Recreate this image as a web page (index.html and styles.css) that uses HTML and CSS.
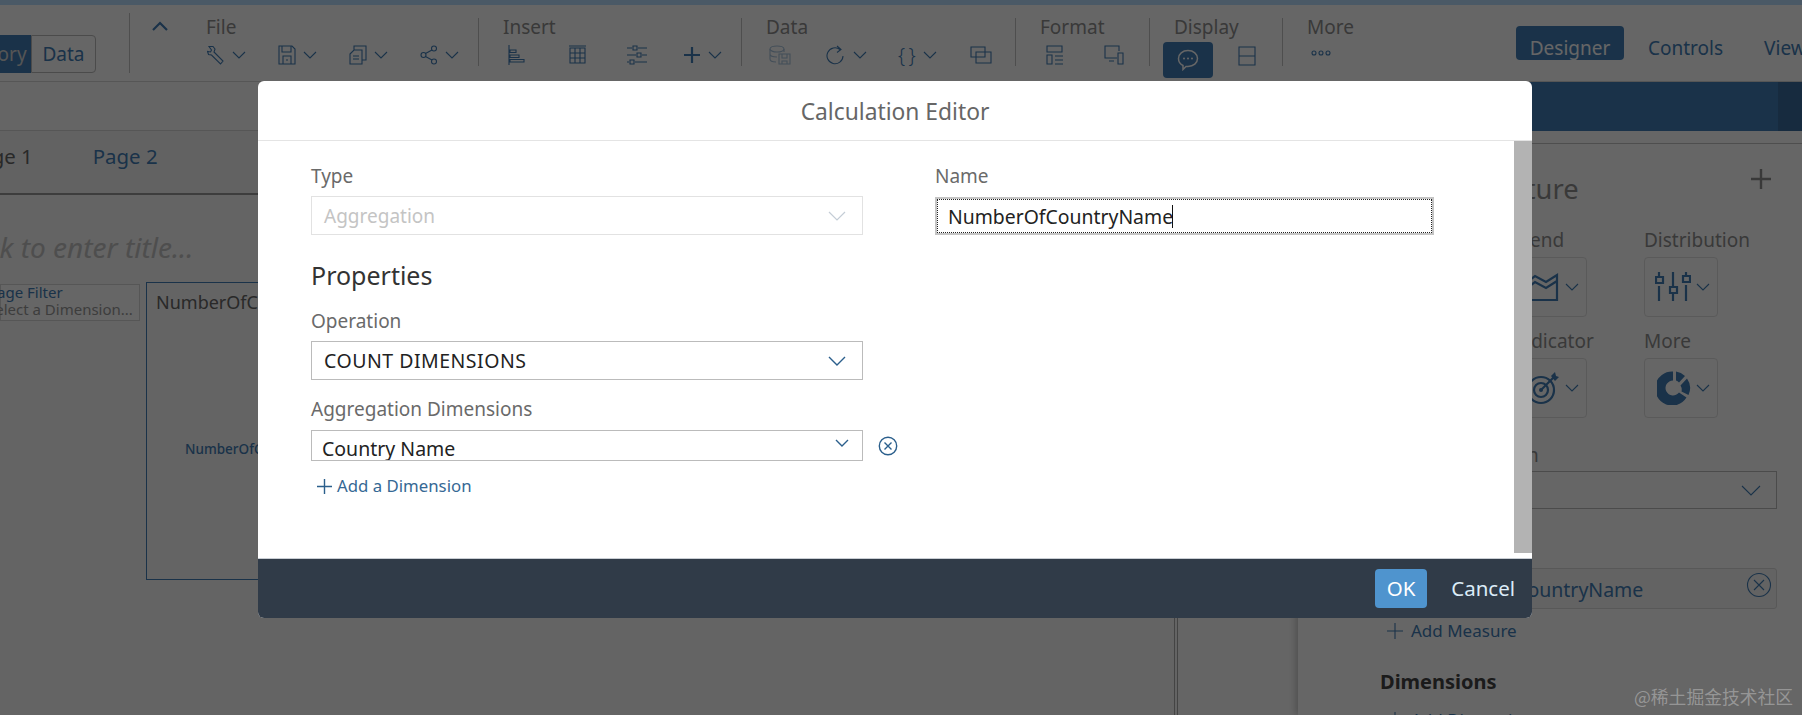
FILE: index.html
```html
<!DOCTYPE html>
<html lang="en">
<head>
<meta charset="utf-8">
<title>Calculation Editor</title>
<link rel="stylesheet" href="styles.css">
</head>
<body>
<div class="page">
  <div class="strip"></div>
  <header class="toolbar">
    <div class="mode-switch"><span class="mode on">Story</span><span class="mode">Data</span></div>
    <div class="collapse">
      <svg class="ic" width="18" height="12" viewBox="0 0 18 12"><path d="M2 10 9 3l7 7" class="s2"/></svg>
    </div>
    <div class="group g-file">
      <div class="g-label">File</div>
      <div class="g-icons">
        <span class="tool"><svg class="ic" width="18" height="20" viewBox="0 0 18 20"><path d="M2 1.500h4l2 2.500-1 3 9 9-2.500 3-9-9-3-.5-1-3 3 .5 1-2z" class="s"/></svg><svg class="chev" width="14" height="8" viewBox="0 0 14 8"><path d="m1 1 6 6 6-6" class="s"/></svg></span>
        <span class="tool"><svg class="ic" width="18" height="20" viewBox="0 0 18 20"><path d="M1 1h13l3 3v15H1zM4 1v6h9V1M5 19v-8h8v8M8 15h2" class="s"/></svg><svg class="chev" width="14" height="8" viewBox="0 0 14 8"><path d="m1 1 6 6 6-6" class="s"/></svg></span>
        <span class="tool"><svg class="ic" width="18" height="20" viewBox="0 0 18 20"><path d="M5 5V1h12v14h-4M1 9l4-4h8v14H1zM4 11h6M4 14h6" class="s"/></svg><svg class="chev" width="14" height="8" viewBox="0 0 14 8"><path d="m1 1 6 6 6-6" class="s"/></svg></span>
        <span class="tool"><svg class="ic" width="18" height="20" viewBox="0 0 18 20"><circle cx="3.500" cy="10" r="2.500" class="s"/><circle cx="14" cy="3.500" r="2.500" class="s"/><circle cx="14" cy="16.500" r="2.500" class="s"/><path d="m5.500 8.500 6.500-3.500M5.500 11.500l6.500 3.500" class="s"/></svg><svg class="chev" width="14" height="8" viewBox="0 0 14 8"><path d="m1 1 6 6 6-6" class="s"/></svg></span>
      </div>
    </div>
    <div class="group g-insert">
      <div class="g-label">Insert</div>
      <div class="g-icons">
        <span class="tool"><svg class="ic" width="18" height="20" viewBox="0 0 18 20"><path d="M1 0v20M2 5h6v2.500H2zM2 10h9v2.500H2zM2 14.500h14V17H2z" class="s"/></svg></span>
        <span class="tool"><svg class="ic" width="18" height="20" viewBox="0 0 18 20"><path d="M2 3h15v15H2zM2 8h15M2 13h15M7 3v15M12 3v15M1 1h17" class="s"/></svg></span>
        <span class="tool"><svg class="ic" width="20" height="20" viewBox="0 0 20 20"><path d="M0 3h5M11 3h9M6 1h4v4H6zM0 10h9M15 10h5M10 8h4v4h-4zM0 17h2M8 17h12M3 15h4v4H3z" class="s"/></svg></span>
        <span class="tool tool-plus"><svg class="ic" width="18" height="18" viewBox="0 0 18 18"><path d="M9 1v16M1 9h16" class="s2"/></svg><svg class="chev" width="14" height="8" viewBox="0 0 14 8"><path d="m1 1 6 6 6-6" class="s"/></svg></span>
      </div>
    </div>
    <div class="group g-data">
      <div class="g-label">Data</div>
      <div class="g-icons">
        <span class="tool"><svg class="ic faint" width="22" height="20" viewBox="0 0 22 20"><ellipse cx="8" cy="4" rx="7" ry="3" class="s"/><path d="M1 4v10c0 2 3 3 6 3M15 4v3M1 9c0 2 3 3 7 3M10 9h11v10H10zM13 9v4h5V9M13 19v-3h5v3" class="s"/></svg></span>
        <span class="tool"><svg class="ic" width="20" height="20" viewBox="0 0 20 20"><path d="M14 4.500a8 8 0 1 0 3 6.500M11 1l4 3.500-4 3" class="s"/></svg><svg class="chev" width="14" height="8" viewBox="0 0 14 8"><path d="m1 1 6 6 6-6" class="s"/></svg></span>
        <span class="tool"><span class="braces">{ }</span><svg class="chev" width="14" height="8" viewBox="0 0 14 8"><path d="m1 1 6 6 6-6" class="s"/></svg></span>
        <span class="tool"><svg class="ic" width="22" height="18" viewBox="0 0 22 18"><path d="M1 1h14v10H1zM6 6h15v11H6z" class="s"/></svg></span>
      </div>
    </div>
    <div class="group g-format">
      <div class="g-label">Format</div>
      <div class="g-icons">
        <span class="tool"><svg class="ic" width="18" height="20" viewBox="0 0 18 20"><path d="M1 1h15v6H1zM1 10h5v9H1zM9 11h8M9 15h8M9 19h8" class="s"/></svg></span>
        <span class="tool"><svg class="ic" width="20" height="20" viewBox="0 0 20 20"><path d="M13 13H1V1h14v5M5 16h5M14 8h5v11h-5z" class="s"/></svg></span>
      </div>
    </div>
    <div class="group g-display">
      <div class="g-label">Display</div>
      <div class="g-icons">
        <span class="tool tool-on"><svg width="22" height="22" viewBox="0 0 22 22"><path d="M11 1.500c5.500 0 9.500 3.500 9.500 8s-4 8-9.500 8H9l-3 3v-4C3 15 1.500 12.500 1.500 9.500c0-4.500 4-8 9.500-8z" class="sw"/><circle cx="7" cy="9.500" r="1" class="fw"/><circle cx="11" cy="9.500" r="1" class="fw"/><circle cx="15" cy="9.500" r="1" class="fw"/></svg></span>
        <span class="tool"><svg class="ic" width="18" height="20" viewBox="0 0 18 20"><path d="M1 1h16v18H1zM1 10h16" class="s"/></svg></span>
      </div>
    </div>
    <div class="group g-more">
      <div class="g-label">More</div>
      <div class="g-icons">
        <span class="tool"><svg class="ic" width="20" height="6" viewBox="0 0 20 6"><circle cx="3" cy="3" r="2" class="s"/><circle cx="10" cy="3" r="2" class="s"/><circle cx="17" cy="3" r="2" class="s"/></svg></span>
      </div>
    </div>
    <nav class="views">
      <span class="view on">Designer</span>
      <span class="view">Controls</span>
      <span class="view">View</span>
    </nav>
  </header>

  <div class="workspace">
    <main class="story">
      <div class="story-top"></div>
      <div class="tabs"><span class="tab cur">Page 1</span><span class="tab">Page 2</span></div>
      <div class="canvas">
        <div class="title-hint">Click to enter title...</div>
        <div class="canvas-row">
          <div class="page-filter"><div class="pf-name">Page Filter</div><div class="pf-hint">Select a Dimension...</div></div>
          <div class="chart-box">
            <div class="chart-title">NumberOfCountryName</div>
            <div class="chart-value">NumberOfCountryName</div>
          </div>
        </div>
      </div>
    </main>
    <aside class="builder">
      <div class="builder-head"><div class="builder-end"></div></div>
      <div class="builder-body">
        <div class="section-head"><h2 class="builder-title">Chart Structure</h2><svg class="add-big" width="22" height="22" viewBox="0 0 22 22"><path d="M11 1v20M1 11h20" class="sg"/></svg></div>
        <div class="tiles">
          <div class="tile-cell"><div class="tile-label">Comparison</div><div class="tile"></div></div>
          <div class="tile-cell"><div class="tile-label">Trend</div><div class="tile"><svg width="34" height="30" viewBox="0 0 34 30"><path d="M1 28h30V3L20 10 9 4 1 10zM1 16l8-6 11 6 11-7" class="s2"/></svg><svg class="chev" width="14" height="8" viewBox="0 0 14 8"><path d="m1 1 6 6 6-6" class="s"/></svg></div></div>
          <div class="tile-cell"><div class="tile-label">Distribution</div><div class="tile"><svg width="36" height="30" viewBox="0 0 36 30"><path d="M4 0v5M4 14v15M18 0v14M18 22v7M31 0v5M31 13v16M1 5h7v6H1zM15 15h7v6h-7zM28 4h7v6h-7z" class="s2"/></svg><svg class="chev" width="14" height="8" viewBox="0 0 14 8"><path d="m1 1 6 6 6-6" class="s"/></svg></div></div>
          <div class="tile-cell"></div>
          <div class="tile-cell"><div class="tile-label">Indicator</div><div class="tile"><svg width="34" height="34" viewBox="0 0 34 34"><circle cx="15" cy="19" r="13" class="s2"/><circle cx="15" cy="19" r="7" class="s2"/><circle cx="15" cy="19" r="2" class="fb"/><path d="m15 19 13-13" class="s2"/><path d="m25 5 4-4 1 4 3 1-4 4z" class="fb"/></svg><svg class="chev" width="14" height="8" viewBox="0 0 14 8"><path d="m1 1 6 6 6-6" class="s"/></svg></div></div>
          <div class="tile-cell"><div class="tile-label">More</div><div class="tile"><svg width="34" height="34" viewBox="0 0 34 34"><path d="M16 .5v9a7.500 7.500 0 1 0 6 12l7.500 5A17 17 0 1 1 16 .5z" class="fb"/><path d="M19 .5a16.500 16.500 0 0 1 9 4.500l-6 6.500a8 8 0 0 0-3-2z" class="fb"/><path d="m30 7.500a16.500 16.500 0 0 1 1.500 16.500l-7-3.500a8 8 0 0 0-1-6z" class="fb"/></svg><svg class="chev" width="14" height="8" viewBox="0 0 14 8"><path d="m1 1 6 6 6-6" class="s"/></svg></div></div>
        </div>
        <div class="field-label">Chart Orientation</div>
        <div class="orient"><svg width="20" height="11" viewBox="0 0 20 11"><path d="m1 1 9 9 9-9" class="s"/></svg></div>
        <div class="measure">NumberOfCountryName<svg class="measure-x" width="26" height="26" viewBox="0 0 26 26"><circle cx="13" cy="13" r="11.500" class="s"/><path d="m8 8 10 10M18 8 8 18" class="s"/></svg></div>
        <div class="add-link"><svg width="16" height="16" viewBox="0 0 16 16"><path d="M8 0v16M0 8h16" class="s"/></svg>Add Measure</div>
        <h3 class="sub-title">Dimensions</h3>
        <div class="add-link add-dim"><svg width="16" height="16" viewBox="0 0 16 16"><path d="M8 0v16M0 8h16" class="s"/></svg>Add Dimension</div>
      </div>
    </aside>
  </div>

  <div class="dim"></div>

  <section class="modal">
    <h1 class="modal-title">Calculation Editor</h1>
    <div class="modal-body">
      <div class="modal-scroll">
        <div class="form-row">
          <div class="col">
            <div class="lbl">Type</div>
            <div class="select disabled"><span>Aggregation</span><svg width="18" height="10" viewBox="0 0 18 10"><path d="m1 1 8 8 8-8" class="sd"/></svg></div>
          </div>
          <div class="col col-name">
            <div class="lbl">Name</div>
            <div class="name-input"><span class="name-text">NumberOfCountryName</span><span class="caret"></span></div>
          </div>
        </div>
        <h2 class="props">Properties</h2>
        <div class="lbl">Operation</div>
        <div class="select strong"><span>COUNT DIMENSIONS</span><svg width="18" height="10" viewBox="0 0 18 10"><path d="m1 1 8 8 8-8" class="sm"/></svg></div>
        <div class="lbl lbl-dim">Aggregation Dimensions</div>
        <div class="dim-row">
          <div class="select short"><span>Country Name</span><svg width="14" height="8" viewBox="0 0 14 8"><path d="m1 1 6 6 6-6" class="sm"/></svg></div>
          <svg class="rm" width="20" height="20" viewBox="0 0 20 20"><circle cx="10" cy="10" r="8.700" class="sm"/><path d="m6.500 6.500 7 7M13.500 6.500l-7 7" class="sm"/></svg>
        </div>
        <div class="add-dimension"><svg width="15" height="15" viewBox="0 0 15 15"><path d="M7.500 0v15M0 7.500h15" class="sm"/></svg>Add a Dimension</div>
      </div>
      <div class="scrollbar"></div>
    </div>
    <footer class="modal-foot">
      <button class="btn-ok">OK</button>
      <button class="btn-cancel">Cancel</button>
    </footer>
  </section>

  <div class="watermark">@稀土掘金技术社区</div>
</div>
</body>
</html>
```

FILE: styles.css
```css
* { box-sizing: border-box; }
html, body { margin: 0; height: 100%; overflow: hidden; }
body { font-family: "Noto Sans", "Open Sans", sans-serif; color: #8a8a8a; background: #fff; }
.page { position: relative; width: 1802px; height: 715px; overflow: hidden; background: #fcfcfc; display: flex; flex-direction: column; }

.s { fill: none; stroke: #417db6; stroke-width: 1.1; }
.s2 { fill: none; stroke: #417db6; stroke-width: 2.2; }
.sg { fill: none; stroke: #8f8f8f; stroke-width: 2.4; }
.sw { fill: none; stroke: #fff; stroke-width: 1.5; }
.fw { fill: #fff; }
.fb { fill: #417db6; }
.sd { fill: none; stroke: #c4cdd6; stroke-width: 1.2; }
.sm { fill: none; stroke: #2b5f8c; stroke-width: 1.4; }

.strip { height: 5px; flex: none; background: #b9dfff; }
.toolbar { height: 77px; flex: none; display: flex; align-items: flex-start; background: #fff; border-bottom: 1px solid #d8d8d8; position: relative; }
.mode-switch { flex: none; display: flex; margin: 30px 0 0 -24px; width: 120px; height: 38px; }
.mode { display: flex; align-items: center; justify-content: center; font-size: 19px; color: #417db6; border: 1px solid #bbb; border-radius: 0 4px 4px 0; width: 65px; flex: none; }
.mode.on { background: #417db6; color: #d5d5d5; border: 0; border-radius: 4px 0 0 4px; width: 55px; }
.collapse { flex: none; width: 77px; height: 60px; margin: 8px 0 0 33px; border-left: 1px solid #c4c4c4; padding: 7px 0 0 21px; }
.collapse .ic { display: block; }
.group { flex: none; margin-top: 13px; height: 48px; border-right: 1px solid #c4c4c4; }
.g-label { font-size: 19px; line-height: 18px; color: #8f8f8f; height: 24px; white-space: nowrap; }
.g-icons { display: flex; align-items: center; height: 26px; }
.tool { display: flex; align-items: center; flex: none; }
.chev { display: block; margin-left: 7px; flex: none; }
.g-file { width: 273px; }
.g-file .g-icons { margin-left: 1px; }
.g-file .tool { width: 71px; }
.g-insert { width: 263px; padding-left: 24px; }
.g-insert .g-icons { margin-left: 5px; }
.g-insert .tool { width: 59.500px; }
.g-insert .tool-plus { margin-left: -4px; }
.g-data { width: 274px; padding-left: 24px; }
.g-data .g-icons { margin-left: 3px; }
.g-data .tool { width: 72px; }
.g-data .tool:first-child { width: 57px; }
.g-format { width: 134px; padding-left: 24px; }
.g-format .g-icons { margin-left: 6px; }
.g-format .tool { width: 58px; }
.g-display { width: 133px; padding-left: 24px; }
.g-display .g-icons { margin-left: -11px; }
.tool-on { width: 50px; height: 36px; background: #417db6; border-radius: 4px; justify-content: center; margin-top: 10px; }
.g-display .tool:last-child { margin-left: 25px; margin-top: 2px; }
.g-more { border-right: 0; padding-left: 24px; width: 120px; }
.g-more .g-icons { margin-left: 4px; height: 22px; }
.faint { opacity: .45; }
.braces { font-size: 20px; line-height: 20px; font-weight: 300; color: #417db6; width: 18px; white-space: nowrap; letter-spacing: -1px; }
.views { position: absolute; top: 21px; left: 1516px; display: flex; align-items: flex-start; }
.view { font-size: 19px; color: #417db6; height: 34px; line-height: 44px; white-space: nowrap; margin-right: 41px; }
.view.on { background: #417db6; color: #fff; width: 108px; text-align: center; border-radius: 4px; margin-right: 24px; }

.workspace { flex: 1; display: flex; min-height: 0; }
.story { flex: 1; min-width: 0; display: flex; flex-direction: column; }
.story-top { height: 49px; flex: none; border-bottom: 1px solid #d8d8d8; }
.tabs { height: 64px; flex: none; border-bottom: 2px solid #9a9a9a; background: #f6f6f6; display: flex; align-items: center; padding-bottom: 12px; }
.tab { font-size: 20.400px; color: #417db6; flex: none; }
.tab.cur { color: #666; margin-left: -32px; margin-right: 60px; }
.canvas { flex: 1; background: #f9f9f9; padding-top: 34px; margin-right: 120px; border-right: 4px double #aaa; }
.title-hint { font-size: 28px; line-height: 36px; font-style: italic; color: #c2c2c2; white-space: nowrap; margin-left: -44px; }
.canvas-row { display: flex; align-items: flex-start; margin-top: 17px; }
.page-filter { flex: none; width: 140px; height: 37px; margin-top: 2px; background: #fff; border: 1px solid #d8d8d8; white-space: nowrap; }
.pf-name { font-size: 15px; line-height: 16px; margin: -1px 0 0 -13px; color: #417db6; }
.pf-hint { font-size: 15px; line-height: 18px; margin-left: -14px; color: #999; }
.chart-box { flex: none; width: 800px; height: 298px; margin-left: 6px; border: 1px solid #417db6; padding: 6px 0 0 9px; }
.chart-title { font-size: 18px; line-height: 26px; color: #666; white-space: nowrap; }
.chart-value { font-size: 13.500px; line-height: 18px; font-weight: 500; color: #417db6; margin: 125px 0 0 29px; white-space: nowrap; }

.builder { flex: none; width: 504px; display: flex; flex-direction: column; background: #fff; box-shadow: -3px 0 6px rgba(0,0,0,.18); }
.builder-head { height: 49px; flex: none; background: #417db6; display: flex; justify-content: flex-end; }
.builder-end { width: 24px; background: #3a6c9e; }
.builder-body { flex: 1; margin-top: 12px; border-top: 1px solid #c4c4c4; padding: 0 25px 0 84px; }
.section-head { display: flex; justify-content: space-between; align-items: flex-start; height: 84px; padding-top: 25px; }
.builder-title { margin: 0; font-size: 27.300px; line-height: 40px; font-weight: 400; color: #8f8f8f; white-space: nowrap; }
.add-big { margin: -1px 5px 0 0; flex: none; }
.tiles { display: grid; grid-template-columns: 131px 131px 74px; row-gap: 12px; }
.tile-label { font-size: 19px; line-height: 24px; height: 29px; color: #8f8f8f; white-space: nowrap; }
.tile { width: 74px; height: 60px; border: 1px solid #e0e0e0; border-radius: 4px; display: flex; align-items: center; justify-content: flex-end; padding-right: 7px; }
.tile .chev { margin-left: 5px; }
.field-label { font-size: 19px; line-height: 24px; margin-top: 25px; color: #8f8f8f; white-space: nowrap; }
.orient { height: 38px; margin-top: 4px; border: 1px solid #bbb; display: flex; align-items: center; justify-content: flex-end; padding-right: 15px; }
.measure { position: relative; height: 41px; margin-top: 59px; background: #f7f7f7; border: 1px solid #ddd; border-radius: 3px; font-size: 19.500px; line-height: 41px; padding-left: 34px; color: #417db6; }
.measure-x { position: absolute; right: 4px; top: 3px; }
.add-link { display: flex; align-items: center; gap: 8px; margin: 11px 0 0 5px; font-size: 17px; line-height: 22px; color: #417db6; }
.sub-title { margin: 28px 0 0 -2px; font-size: 20px; line-height: 24px; font-weight: 700; color: #444; }
.add-dim { margin-top: 15px; }

.dim { position: absolute; inset: 0; background: rgba(0,0,0,.6); }

.modal { position: absolute; left: 258px; top: 81px; width: 1274px; height: 537px; background: #fff; border-radius: 6px; display: flex; flex-direction: column; overflow: hidden; color: #666; }
.modal-title { flex: none; margin: 0; height: 60px; border-bottom: 1px solid #e4e4e4; text-align: center; font-size: 22.800px; font-weight: 400; line-height: 61px; color: #666; }
.modal-body { flex: 1; min-height: 0; display: flex; align-items: flex-start; }
.modal-scroll { flex: 1; min-width: 0; padding: 23px 0 0 53px; height: 100%; }
.scrollbar { flex: none; width: 18px; height: 412px; background: #b3b3b3; }
.form-row { display: flex; }
.col { width: 552px; flex: none; }
.col-name { margin-left: 72px; width: 499px; }
.lbl { font-size: 19px; line-height: 24px; color: #6a6a6a; }
.select { width: 552px; height: 39px; margin-top: 8px; border: 1px solid #bbb; display: flex; align-items: center; justify-content: space-between; padding: 0 16px 0 12px; font-size: 19px; color: #222; }
.select.disabled { border-color: #e2e2e2; color: #c4c4c4; }
.select.strong { font-size: 19.500px; letter-spacing: .5px; }
.name-input { height: 38px; margin-top: 9px; border: 2px solid #c4c4c4; outline: 1px dotted #222; outline-offset: -3px; display: flex; align-items: center; padding-left: 11px; font-size: 19.400px; color: #222; }
.caret { width: 1px; height: 23px; background: #111; margin-left: -1px; }
.props { margin: 23px 0 17px; font-size: 25px; line-height: 34px; font-weight: 400; color: #333; }
.lbl-dim { margin-top: 17px; }
.dim-row { display: flex; align-items: center; gap: 15px; margin-top: 9px; }
.select.short { margin-top: 0; height: 31px; padding: 0 13px 6px 10px; align-items: flex-end; overflow: hidden; font-size: 19.500px; }
.select.short span { line-height: 22px; margin-bottom: -6px; }
.select.short svg { align-self: center; }
.rm { flex: none; }
.add-dimension { display: flex; align-items: center; gap: 5px; margin: 13px 0 0 6px; font-size: 16.800px; line-height: 24px; color: #356894; }
.modal-foot { flex: none; height: 60px; border-top: 1px solid #c9ced4; background: #303b48; display: flex; align-items: center; justify-content: flex-end; padding-right: 17px; gap: 24px; }
.btn-ok { width: 52px; height: 39px; border: 0; border-radius: 4px; background: #4f94ce; color: #fff; font: 400 20.500px "Noto Sans", sans-serif; padding: 0 0 2px; }
.btn-cancel { border: 0; padding: 0 0 2px; background: none; color: #dcecf8; font: 400 20.500px "Noto Sans", sans-serif; }
.watermark { position: absolute; left: 1634px; top: 684px; font-family: "Noto Sans CJK SC", sans-serif; font-size: 17.800px; line-height: 24px; color: rgba(255,255,255,.32); white-space: nowrap; }
```
